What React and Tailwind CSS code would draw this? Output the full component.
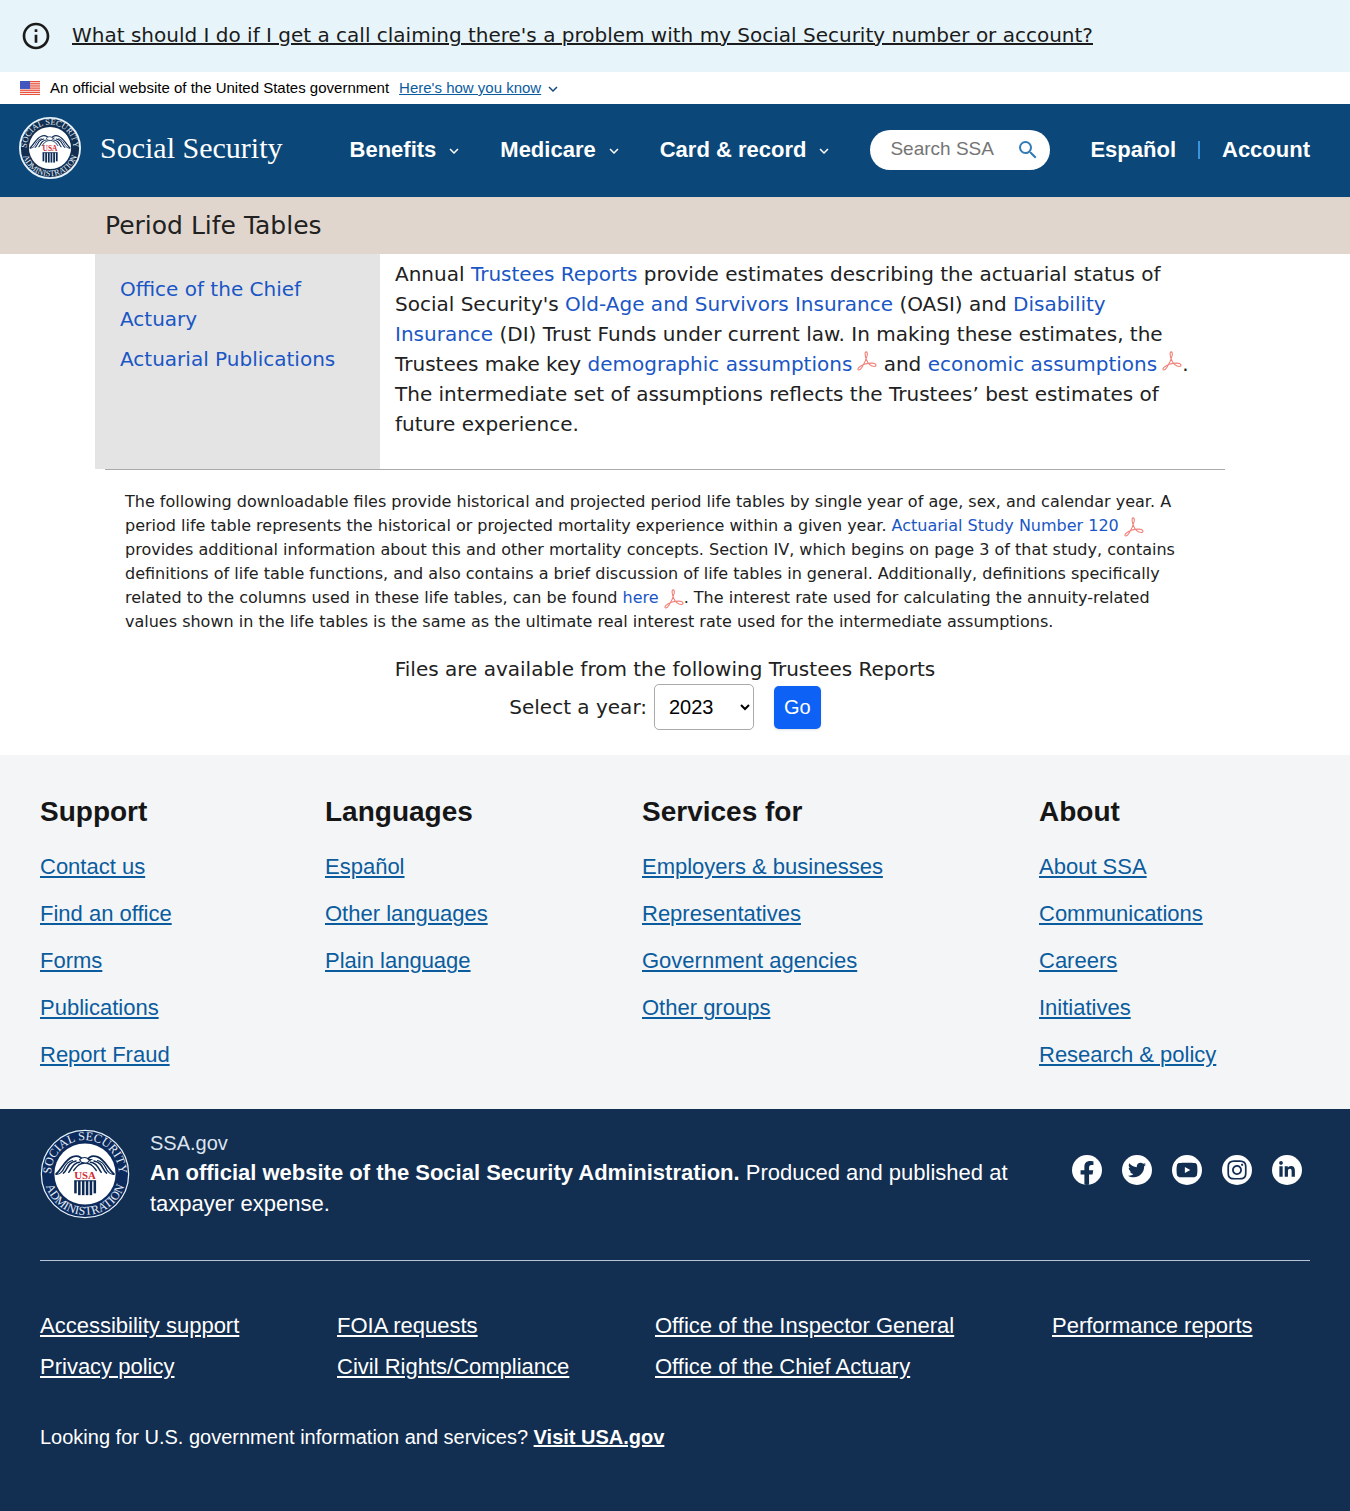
import React, { useId } from "react";
import { FaFacebookF, FaTwitter, FaYoutube, FaInstagram, FaLinkedinIn } from "react-icons/fa";
import { MdSearch, MdInfoOutline, MdKeyboardArrowDown } from "react-icons/md";

const stripes = [0, 1, 2, 3, 4, 5, 6];

function Flag() {
  return (
    <svg viewBox="0 0 20 14" className="h-[14px] w-5 shrink-0" role="img" aria-label="U.S. flag">
      <rect width="20" height="14" fill="#fff" />
      {stripes.map((i) => (
        <rect key={i} y={i * 2.15} width="20" height="1.3" fill="#e8523f" />
      ))}
      <rect width="10" height="8" fill="#2a3fb5" />
      {[1, 3, 5, 7].map((y) =>
        [1, 3, 5, 7, 9].map((x) => <circle key={`${x}-${y}`} cx={x} cy={y} r="0.5" fill="#a9b6ee" />)
      )}
    </svg>
  );
}

function Wing() {
  return (
    <g fill="none" stroke="#0c2a55" strokeLinecap="round">
      <path d="M49 36 C46 31 41 29 36 31 C28 34 25 43 18 50" strokeWidth="2" />
      <path d="M18 50 C21 51 25 48 27 43 C29 39 32 36 36 35" strokeWidth="1.4" />
      <path d="M26 49 C29 47 30 42 33 39 C35 37 37 36 40 35.500" strokeWidth="1.700" />
      <path d="M32 48 C34 46 35 42 38 39.500 C40 38 42 37 44 37" strokeWidth="1.700" />
      <path d="M37.500 46 C39 44 40 42 43 40 C45 39 46 38 49 38" strokeWidth="1.600" />
    </g>
  );
}

function Seal({ className, ring, rim }) {
  const id = useId();
  return (
    <svg viewBox="0 0 100 100" className={className} role="img" aria-label="Social Security Administration seal">
      <defs>
        <path id={`${id}top`} d="M 12.500 54 A 37.700 37.700 0 1 1 87.500 54" />
        <path id={`${id}bottom`} d="M 4.500 50 A 45.500 45.500 0 0 0 95.500 50" />
      </defs>
      <circle cx="50" cy="50" r="48.500" fill={ring} stroke="#e6f2fb" strokeWidth={rim} />
      <circle cx="50" cy="50" r="34" fill="#fff" />
      <g fill="#e3eef8" fontFamily="Liberation Serif, serif" fontSize="13.500" textAnchor="middle">
        <text>
          <textPath href={`#${id}top`} startOffset="50%">SOCIAL SECURITY</textPath>
        </text>
        <text>
          <textPath href={`#${id}bottom`} startOffset="50%">ADMINISTRATION</textPath>
        </text>
      </g>
      <Wing />
      <g transform="matrix(-1 0 0 1 100 0)">
        <Wing />
      </g>
      <path d="M44 34 C47 31 52 31 54 34 L57 34 L54 36 C53 39 49 38 46 37 Z" fill="#fff" stroke="#0c2a55" strokeWidth="1.200" />
      <text x="50" y="55.500" fontFamily="Liberation Serif, serif" fontSize="12" fontWeight="bold" fill="#d42a30" textAnchor="middle">USA</text>
      {[38, 42.300, 46.600, 50.900, 55.200, 59.500].map((x, i) => (
        <rect key={x} x={x} y="57.500" width="2.800" height={i === 0 || i === 5 ? 14 : 16} fill="#0c2a55" />
      ))}
      <rect x="38" y="57" width="24.300" height="1.200" fill="#0c2a55" />
    </svg>
  );
}

function PdfIcon({ className }) {
  return (
    <svg viewBox="0 0 24 24" className={className} role="img" aria-label="PDF" fill="none" strokeLinecap="round">
      <path d="M11 1 C9 1 9.600 6 11.200 10 C13 15 17 18.500 21 18.500 C24 18.500 23.500 14.500 18 14.500 C12 14.500 5 17 2 20 C-0.500 23 3 24.500 6 19.500 C8.500 15.500 11.500 9 12.300 5 C12.700 2.500 12 1 11 1 Z" stroke="#f08078" strokeWidth="1.300" />
    </svg>
  );
}

const pdfLarge = "ml-[5px] inline-block size-5 align-baseline";
const pdfSmall = "ml-[5px] inline-block size-5 align-middle";
const link = "text-[#1a56c4] hover:underline";

const navItems = ["Benefits", "Medicare", "Card & record"];

const footerGroups = [
  { title: "Support", links: ["Contact us", "Find an office", "Forms", "Publications", "Report Fraud"] },
  { title: "Languages", links: ["Español", "Other languages", "Plain language"] },
  { title: "Services for", links: ["Employers & businesses", "Representatives", "Government agencies", "Other groups"] },
  { title: "About", links: ["About SSA", "Communications", "Careers", "Initiatives", "Research & policy"] },
];

const legalGroups = [
  ["Accessibility support", "Privacy policy"],
  ["FOIA requests", "Civil Rights/Compliance"],
  ["Office of the Inspector General", "Office of the Chief Actuary"],
  ["Performance reports"],
];

const social = [
  ["Facebook", FaFacebookF, "size-6 self-end"],
  ["Twitter", FaTwitter, "size-[18px]"],
  ["YouTube", FaYoutube, "size-[22px]"],
  ["Instagram", FaInstagram, "size-[22px]"],
  ["LinkedIn", FaLinkedinIn, "size-[18px]"],
];

export default function App() {
  return (
    <div className="bg-white font-['Liberation_Sans',Arial,sans-serif] text-[#212121]">
      <div className="flex h-[72px] items-center gap-5 bg-[#e7f4f9] px-5 text-[#1b1b1b]">
        <MdInfoOutline className="size-8 shrink-0" />
        <a href="#scam" className="font-['DejaVu_Sans',sans-serif] pb-0.5 text-xl underline">
          What should I do if I get a call claiming there's a problem with my Social Security number or account?
        </a>
      </div>

      <div className="flex h-8 items-center px-5 text-[15px] text-black">
        <Flag />
        <span className="ml-[10px]">An official website of the United States government</span>
        <button type="button" className="ml-[10px] flex items-center gap-0.5 text-[#0b5c9e]">
          <span className="underline">Here's how you know</span>
          <MdKeyboardArrowDown className="size-5 pt-0.5 text-[#144a7c]" />
        </button>
      </div>

      <header className="flex h-[93px] items-center bg-[#0b4778] pb-0.5 pl-[19px] pr-10 text-white">
        <a href="#home" className="flex items-center gap-[19px] pb-1">
          <Seal className="size-[62px]" ring="#112e51" rim="3" />
          <span className="font-['Liberation_Serif',serif] text-[30px]">Social Security</span>
        </a>
        <nav className="ml-auto flex items-center gap-9 text-[22px] font-bold">
          {navItems.map((item) => (
            <button key={item} type="button" className="flex items-center gap-2">
              {item}
              <MdKeyboardArrowDown className="size-5 pt-0.5" />
            </button>
          ))}
        </nav>
        <form className="ml-9 flex h-10 w-[180px] items-center rounded-full bg-white pl-5 pr-[10px]">
          <input type="search" aria-label="Search SSA" placeholder="Search SSA" className="min-w-0 flex-1 bg-transparent text-[19px] text-black outline-none placeholder:text-[#757575]" />
          <button type="button" aria-label="Search" className="text-[#337bb5]">
            <MdSearch className="size-6" />
          </button>
        </form>
        <div className="ml-10 flex items-center gap-[22px] text-[22px] font-bold">
          <a href="#es">Español</a>
          <span className="h-[18px] w-0.5 bg-[#3a94dc]" />
          <a href="#account">Account</a>
        </div>
      </header>

      <div className="bg-[#e1d6cd]">
        <h1 className="mx-auto flex h-[57px] max-w-[1140px] items-center font-['DejaVu_Sans',sans-serif] text-[25px]">Period Life Tables</h1>
      </div>

      <main className="mx-auto max-w-[1160px] pb-[25px] pr-5 font-['DejaVu_Sans',sans-serif]">
        <div className="flex text-xl leading-[30px]">
          <aside className="flex w-[285px] shrink-0 flex-col gap-[10px] bg-[#e4e4e4] px-[25px] pt-5">
            <a href="#oact" className={link}>Office of the Chief Actuary</a>
            <a href="#pubs" className={link}>Actuarial Publications</a>
          </aside>
          <p className="flex-1 pb-[30px] pl-[15px] pr-[25px] pt-[5px]">
            Annual <a href="#tr" className={link}>Trustees Reports</a> provide estimates describing the actuarial status of Social Security's{" "}
            <a href="#oasi" className={link}>Old-Age and Survivors Insurance</a> (OASI) and{" "}
            <a href="#di" className={link}>Disability Insurance</a> (DI) Trust Funds under current law. In making these estimates, the Trustees make key{" "}
            <a href="#demographic" className={link}>demographic assumptions</a><PdfIcon className={pdfLarge} /> and{" "}
            <a href="#economic" className={link}>economic assumptions</a><PdfIcon className={pdfLarge} />. The intermediate set of assumptions reflects the Trustees’ best estimates of future experience.
          </p>
        </div>
        <div className="ml-[10px] mr-[10px] border-t border-[#aaaaaa] px-5 pt-5">
          <p className="text-base leading-6">
            The following downloadable files provide historical and projected period life tables by single year of age, sex, and calendar year. A period life table represents the historical or projected mortality experience within a given year.{" "}
            <a href="#study" className={link}>Actuarial Study Number 120</a><PdfIcon className={pdfSmall} /> provides additional information about this and other mortality concepts. Section IV, which begins on page 3 of that study, contains definitions of life table functions, and also contains a brief discussion of life tables in general. Additionally, definitions specifically related to the columns used in these life tables, can be found{" "}
            <a href="#here" className={link}>here</a><PdfIcon className={pdfSmall} />. The interest rate used for calculating the annuity-related values shown in the life tables is the same as the ultimate real interest rate used for the intermediate assumptions.
          </p>
          <form className="mt-5 text-center text-xl leading-[30px]">
            <p>Files are available from the following Trustees Reports</p>
            <div className="flex items-center justify-center">
              <label htmlFor="year">Select a year:</label>
              <select id="year" defaultValue="2023" className="ml-[7px] h-[46px] w-[100px] rounded-[5px] border border-[#aaaaaa] bg-white px-[10px] font-['Liberation_Sans',sans-serif] text-black">
                <option>2023</option>
                <option>2022</option>
                <option>2021</option>
              </select>
              <button type="button" className="ml-5 h-[43px] rounded-[5px] bg-[#0d61f5] px-[10px] font-['Liberation_Sans',sans-serif] text-white shadow-sm">Go</button>
            </div>
          </form>
        </div>
      </main>

      <footer>
        <div className="grid grid-cols-[285fr_317fr_397fr_271fr] bg-[#f3f5f6] px-10 pb-[38px] pt-10">
          {footerGroups.map((g) => (
            <section key={g.title}>
              <h2 className="text-[28px] font-bold leading-[34px] text-[#161616]">{g.title}</h2>
              <ul className="mt-[21px] flex flex-col gap-[14px] text-[22px] leading-[33px]">
                {g.links.map((l) => (
                  <li key={l}>
                    <a href="#footer" className="text-[#0b5c9e] underline decoration-2 underline-offset-2">{l}</a>
                  </li>
                ))}
              </ul>
            </section>
          ))}
        </div>

        <div className="bg-[#122e51] px-10 pb-[59px] pt-5 text-white">
          <div className="flex items-start">
            <Seal className="size-[90px] shrink-0" ring="#0d2a5c" rim="1.4" />
            <div className="ml-5 flex-1">
              <p className="text-xl leading-7 text-[#dce4ef]">SSA.gov</p>
              <p className="text-[22px] leading-[31px]">
                <strong>An official website of the Social Security Administration.</strong> Produced and published at taxpayer expense.
              </p>
            </div>
            <div className="ml-5 mr-2 mt-[26px] flex gap-5">
              {social.map(([name, Icon, size]) => (
                <a key={name} href="#social" aria-label={name} className="flex size-[30px] items-center justify-center overflow-hidden rounded-full bg-white text-[#122e51]">
                  <Icon className={size} />
                </a>
              ))}
            </div>
          </div>
          <div className="mt-[41px] grid grid-cols-[297fr_318fr_397fr_258fr] border-t border-[#b8c5d6] pt-11 text-[22px]">
            {legalGroups.map((group) => (
              <ul key={group[0]} className="leading-[41px]">
                {group.map((l) => (
                  <li key={l}>
                    <a href="#legal" className="underline underline-offset-2">{l}</a>
                  </li>
                ))}
              </ul>
            ))}
          </div>
          <p className="mt-[35px] text-xl leading-[30px]">
            Looking for U.S. government information and services? <a href="#usa" className="font-bold underline">Visit USA.gov</a>
          </p>
        </div>
      </footer>
    </div>
  );
}
